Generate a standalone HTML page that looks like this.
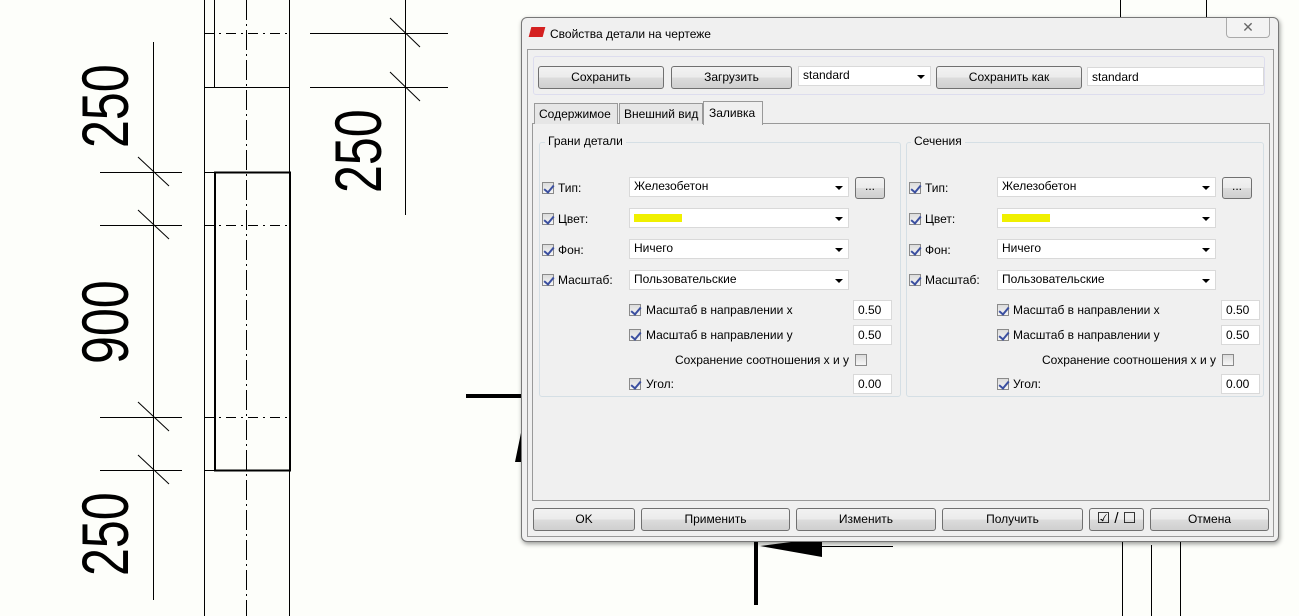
<!DOCTYPE html>
<html><head><meta charset="utf-8"><style>
*{box-sizing:border-box;margin:0;padding:0}
body{width:1299px;height:616px;background:#fdfefa;position:relative;overflow:hidden;font-family:"Liberation Sans",sans-serif;font-size:12px;color:#000}
.a{position:absolute}
.dlg{left:521px;top:17px;width:758px;height:525px;background:#f0f0f0;border:1px solid #777;border-radius:6px;box-shadow:1px 2px 5px rgba(0,0,0,.4)}
.btn{position:absolute;border:1px solid #707070;border-radius:3px;background:linear-gradient(#f2f2f2,#ebebeb 50%,#dcdcdc 51%,#cfcfcf);text-align:center;line-height:20px;font-size:12px}
.combo{position:absolute;background:#fff;border:1px solid #d9d9d9;height:20px;padding-left:4px;line-height:17px}
.combo:after{content:"";position:absolute;right:5px;top:8px;border-left:4px solid transparent;border-right:4px solid transparent;border-top:4px solid #000}
.field{position:absolute;background:#fff;border:1px solid #d9d9d9;height:20px;padding-left:4px;line-height:18px}
.cb{position:absolute;width:12px;height:12px;border:1px solid #8a8a8a;background:linear-gradient(#dcdcdc,#f6f6f6)}
.cb.c:after{content:"";position:absolute;left:3px;top:0px;width:4px;height:8px;border-right:2px solid #3b4fa0;border-bottom:2px solid #3b4fa0;transform:rotate(40deg)}
.lbl{position:absolute;white-space:nowrap}
.grp{position:absolute;border:1px solid #d5dfe5;border-radius:3px}
.gt{position:absolute;background:#f0f0f0;padding:0 3px}
</style></head><body>
<svg class="a" style="left:0;top:0" width="1299" height="616">
<g stroke="#000" stroke-width="1" fill="none">
<line x1="153.5" y1="42" x2="153.5" y2="600"/>
<line x1="100" y1="172.5" x2="182" y2="172.5"/><line x1="100" y1="225.5" x2="182" y2="225.5"/>
<line x1="100" y1="417.5" x2="182" y2="417.5"/><line x1="100" y1="470.5" x2="182" y2="470.5"/>
<line x1="138" y1="157" x2="169" y2="186"/><line x1="138" y1="210" x2="169" y2="239"/>
<line x1="138" y1="402" x2="169" y2="431"/><line x1="138" y1="455" x2="169" y2="484"/>
<line x1="204.5" y1="0" x2="204.5" y2="616"/><line x1="289.5" y1="0" x2="289.5" y2="616"/>
<line x1="214.5" y1="0" x2="214.5" y2="87"/><line x1="214" y1="87.5" x2="289" y2="87.5"/>
<rect x="215" y="172.5" width="75" height="298" stroke-width="2"/>
<line x1="246.5" y1="0" x2="246.5" y2="616" stroke-dasharray="20,4,2,4"/>
<line x1="204" y1="33.5" x2="289" y2="33.5" stroke-dasharray="10,5,2,5"/>
<line x1="204" y1="225.5" x2="289" y2="225.5" stroke-dasharray="10,5,2,5"/>
<line x1="204" y1="417.5" x2="289" y2="417.5" stroke-dasharray="10,5,2,5"/>
<line x1="204" y1="470.5" x2="215" y2="470.5"/><line x1="204" y1="172.5" x2="215" y2="172.5"/><line x1="204" y1="87.5" x2="214" y2="87.5"/>
<line x1="310" y1="33.5" x2="448" y2="33.5"/><line x1="310" y1="87.5" x2="448" y2="87.5"/>
<line x1="405.5" y1="0" x2="405.5" y2="215"/>
<line x1="390" y1="18" x2="420" y2="47"/><line x1="390" y1="72" x2="420" y2="101"/>
<line x1="1120.5" y1="0" x2="1120.5" y2="17"/><line x1="1206.5" y1="0" x2="1206.5" y2="17"/>
<line x1="1122.5" y1="540" x2="1122.5" y2="616"/><line x1="1151.5" y1="545" x2="1151.5" y2="616"/><line x1="1180.5" y1="540" x2="1180.5" y2="616"/>
<line x1="800" y1="546.5" x2="893" y2="546.5"/>
</g>
<line x1="466" y1="396" x2="522" y2="396" stroke="#000" stroke-width="4"/>
<polygon points="522,428 515,462 522,462" fill="#000"/>
<line x1="756" y1="538" x2="756" y2="605" stroke="#000" stroke-width="4"/>
<polygon points="760,546 822,538 822,557" fill="#000"/>
<g font-family="Liberation Sans, sans-serif" font-size="66" fill="#000">
<text transform="translate(128,148) rotate(-90) scale(0.76,1)">250</text>
<text transform="translate(128,364) rotate(-90) scale(0.76,1)">900</text>
<text transform="translate(128,576) rotate(-90) scale(0.76,1)">250</text>
<text transform="translate(381,193) rotate(-90) scale(0.76,1)">250</text>
</g>
</svg>

<div class="a dlg">
<div class="a" style="left:8px;top:9px;width:14px;height:10px;background:#d42020;transform:skewX(-15deg)"></div>
<div class="lbl" style="left:28px;top:9px;font-size:12px">Свойства детали на чертеже</div>
<div class="a" style="left:704px;top:0;width:44px;height:20px;border:1px solid #aaa;border-top:none;border-radius:0 0 4px 4px;background:#f3f3f3;text-align:center;line-height:18px;color:#666;font-size:14px">✕</div>
<div class="a" style="left:5px;top:31px;width:747px;height:488px;border:1px solid #999;background:#f0f0f0"></div>
<div class="grp" style="left:11px;top:38px;width:732px;height:39px;border-color:#dde"></div>
<div class="btn" style="left:16px;top:48px;width:126px;height:23px">Сохранить</div>
<div class="btn" style="left:149px;top:48px;width:121px;height:23px">Загрузить</div>
<div class="combo" style="left:276px;top:48px;width:133px;height:20px">standard</div>
<div class="btn" style="left:414px;top:48px;width:146px;height:23px">Сохранить как</div>
<div class="field" style="left:565px;top:49px;width:177px;height:19px">standard</div>

<div class="a" style="left:10px;top:105px;width:738px;height:378px;border:1px solid #999;background:#f0f0f0"></div>
<div class="a" style="left:12px;top:85px;width:84px;height:21px;border:1px solid #999;border-bottom:none;background:#e6e6e6;line-height:20px;padding-left:4px">Содержимое</div>
<div class="a" style="left:97px;top:85px;width:84px;height:21px;border:1px solid #999;border-bottom:none;background:#e6e6e6;line-height:20px;padding-left:4px">Внешний вид</div>
<div class="a" style="left:181px;top:83px;width:60px;height:24px;border:1px solid #999;border-bottom:none;background:#f0f0f0;line-height:22px;padding-left:5px">Заливка</div>

<div class="grp" style="left:17px;top:124px;width:362px;height:255px"></div>
<div class="gt" style="left:23px;top:116px">Грани детали</div>
<div class="grp" style="left:384px;top:124px;width:358px;height:255px"></div>
<div class="gt" style="left:389px;top:116px">Сечения</div>

<div class="cb c" style="left:20px;top:164px"></div><div class="lbl" style="left:36px;top:163px">Тип:</div>
<div class="combo" style="left:107px;top:159px;width:220px">Железобетон</div>
<div class="btn" style="left:333px;top:159px;width:30px;height:22px;line-height:16px">...</div>
<div class="cb c" style="left:20px;top:195px"></div><div class="lbl" style="left:36px;top:194px">Цвет:</div>
<div class="combo" style="left:107px;top:190px;width:220px"><div class="a" style="left:4px;top:5px;width:48px;height:8px;background:#f0f000"></div></div>
<div class="cb c" style="left:20px;top:226px"></div><div class="lbl" style="left:36px;top:225px">Фон:</div>
<div class="combo" style="left:107px;top:221px;width:220px">Ничего</div>
<div class="cb c" style="left:20px;top:256px"></div><div class="lbl" style="left:36px;top:255px">Масштаб:</div>
<div class="combo" style="left:107px;top:252px;width:220px">Пользовательские</div>
<div class="cb c" style="left:107px;top:286px"></div><div class="lbl" style="left:124px;top:285px">Масштаб в направлении x</div>
<div class="field" style="left:331px;top:282px;width:39px">0.50</div>
<div class="cb c" style="left:107px;top:311px"></div><div class="lbl" style="left:124px;top:310px">Масштаб в направлении y</div>
<div class="field" style="left:331px;top:307px;width:39px">0.50</div>
<div class="lbl" style="left:153px;top:335px">Сохранение соотношения x и y</div>
<div class="cb" style="left:333px;top:336px"></div>
<div class="cb c" style="left:107px;top:360px"></div><div class="lbl" style="left:124px;top:359px">Угол:</div>
<div class="field" style="left:331px;top:356px;width:39px">0.00</div>

<div class="cb c" style="left:387px;top:164px"></div><div class="lbl" style="left:403px;top:163px">Тип:</div>
<div class="combo" style="left:475px;top:159px;width:219px">Железобетон</div>
<div class="btn" style="left:700px;top:159px;width:30px;height:22px;line-height:16px">...</div>
<div class="cb c" style="left:387px;top:195px"></div><div class="lbl" style="left:403px;top:194px">Цвет:</div>
<div class="combo" style="left:475px;top:190px;width:219px"><div class="a" style="left:4px;top:5px;width:48px;height:8px;background:#f0f000"></div></div>
<div class="cb c" style="left:387px;top:226px"></div><div class="lbl" style="left:403px;top:225px">Фон:</div>
<div class="combo" style="left:475px;top:221px;width:219px">Ничего</div>
<div class="cb c" style="left:387px;top:256px"></div><div class="lbl" style="left:403px;top:255px">Масштаб:</div>
<div class="combo" style="left:475px;top:252px;width:219px">Пользовательские</div>
<div class="cb c" style="left:475px;top:286px"></div><div class="lbl" style="left:491px;top:285px">Масштаб в направлении x</div>
<div class="field" style="left:699px;top:282px;width:39px">0.50</div>
<div class="cb c" style="left:475px;top:311px"></div><div class="lbl" style="left:491px;top:310px">Масштаб в направлении y</div>
<div class="field" style="left:699px;top:307px;width:39px">0.50</div>
<div class="lbl" style="left:520px;top:335px">Сохранение соотношения x и y</div>
<div class="cb" style="left:700px;top:336px"></div>
<div class="cb c" style="left:475px;top:360px"></div><div class="lbl" style="left:491px;top:359px">Угол:</div>
<div class="field" style="left:699px;top:356px;width:39px">0.00</div>

<div class="btn" style="left:11px;top:490px;width:102px;height:23px">OK</div>
<div class="btn" style="left:119px;top:490px;width:149px;height:23px">Применить</div>
<div class="btn" style="left:274px;top:490px;width:140px;height:23px">Изменить</div>
<div class="btn" style="left:420px;top:490px;width:141px;height:23px">Получить</div>
<div class="btn" style="left:567px;top:490px;width:55px;height:23px;font-size:15px;line-height:19px">☑ / ☐</div>
<div class="btn" style="left:628px;top:490px;width:119px;height:23px">Отмена</div>
</div>
</body></html>
